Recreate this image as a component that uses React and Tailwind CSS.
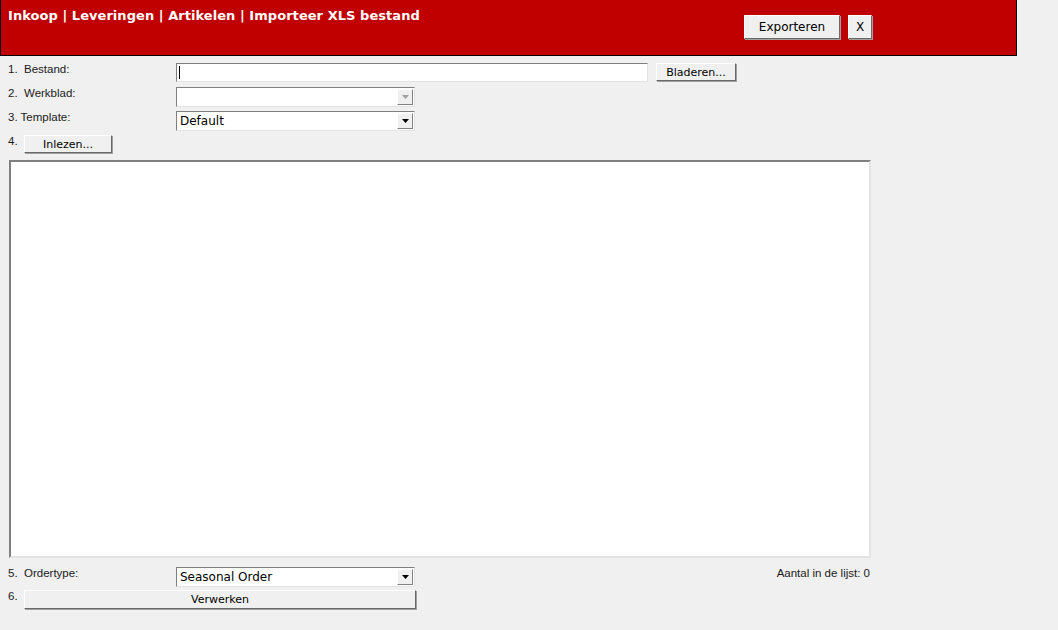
import React from 'react';

const ui = { fontFamily: 'Tahoma, "DejaVu Sans", Verdana, sans-serif' };
const lab = { fontFamily: '"Liberation Sans", Arial, sans-serif' };

function WinButton({ className = '', children }) {
  return (
    <button
      className={`bg-[#f0f0f0] border border-t-white border-l-white border-b-[#696969] border-r-[#696969] shadow-[1px_1px_0_#a0a0a0] text-[11px] text-black leading-none ${className}`}
      style={ui}
    >
      {children}
    </button>
  );
}

function Select({ value, disabled }) {
  return (
    <div className="w-[239px] h-[20px] bg-white border border-t-[#808080] border-l-[#808080] border-b-[#e3e3e3] border-r-[#e3e3e3] flex items-center">
      <span className="flex-1 pl-[3px] text-[12px] text-black leading-none" style={ui}>{value}</span>
      <div className="w-[16px] h-[16px] mr-[1px] bg-[#f0f0f0] border border-t-white border-l-white border-b-[#808080] border-r-[#808080] flex items-center justify-center">
        <svg width="7" height="4" viewBox="0 0 7 4">
          <path d="M0 0h7L3.5 4z" fill={disabled ? '#a0a0a0' : '#000'} />
        </svg>
      </div>
    </div>
  );
}

export default function App() {
  return (
    <div className="w-[1058px] h-[630px] bg-[#f0f0f0] overflow-hidden">
      <div className="w-[1017px] h-[56px] bg-[#c00000] border-l border-r border-b border-black flex items-start">
        <h1 className="pl-[7px] pt-[6px] text-[13px] font-bold text-white tracking-[0.05px]" style={ui}>
          Inkoop | Leveringen | Artikelen | Importeer XLS bestand
        </h1>
        <div className="ml-auto mr-[144px] mt-[15px] flex gap-[8px]">
          <WinButton className="w-[96px] h-[24px] text-[12px]">Exporteren</WinButton>
          <WinButton className="w-[24px] h-[24px] text-[12px]">X</WinButton>
        </div>
      </div>

      <div className="pl-[8px] pt-[7px] text-[11.5px] leading-[12px] text-[#1a1a1a]" style={lab}>
        <div className="flex items-start h-[24px]">
          <span className="w-[168px]">1.&nbsp; Bestand:</span>
          <div className="w-[472px] h-[19px] bg-white border border-t-[#808080] border-l-[#808080] border-b-[#e3e3e3] border-r-[#e3e3e3] flex items-center pl-[2px]">
            <div className="w-px h-[13px] bg-black" />
          </div>
          <WinButton className="ml-[8px] w-[80px] h-[18px]">Bladeren...</WinButton>
        </div>
        <div className="flex items-start h-[24px]">
          <span className="w-[168px]">2.&nbsp; Werkblad:</span>
          <Select value="" disabled />
        </div>
        <div className="flex items-start h-[24px]">
          <span className="w-[168px]">3. Template:</span>
          <Select value="Default" />
        </div>
        <div className="flex items-start h-[25px]">
          <span className="w-[16px]">4.</span>
          <WinButton className="w-[88px] h-[18px]">Inlezen...</WinButton>
        </div>

        <div className="ml-[1px] w-[862px] h-[398px] bg-white border-t-[2px] border-l-[2px] border-b-[2px] border-r-[2px] border-t-[#808080] border-l-[#808080] border-b-[#e3e3e3] border-r-[#e3e3e3]" />

        <div className="flex items-start h-[23px] mt-[9px] w-[862px]">
          <span className="w-[168px]">5.&nbsp; Ordertype:</span>
          <Select value="Seasonal Order" />
          <span className="ml-auto">Aantal in de lijst: 0</span>
        </div>
        <div className="flex items-start">
          <span className="w-[16px]">6.</span>
          <WinButton className="w-[392px] h-[19px]">Verwerken</WinButton>
        </div>
      </div>
    </div>
  );
}
